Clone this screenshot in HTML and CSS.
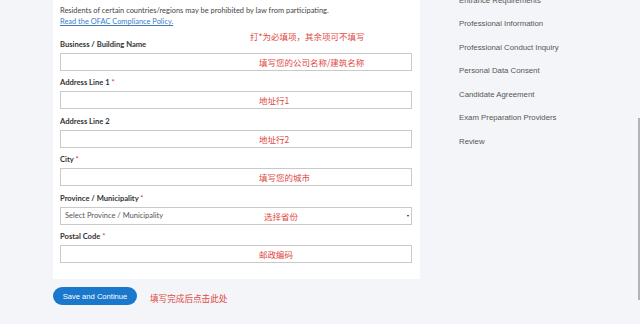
FILE: index.html
```html
<!DOCTYPE html>
<html lang="zh-CN">
<head>
  <meta charset="UTF-8" />
  <title>Address | Registration</title>
  <meta name="viewport" content="width=device-width, initial-scale=1.0" />
  <link rel="stylesheet" href="styles.css">
</head>
<body>

  <div class="page">
    <div class="main">
      <form class="card">
        <p class="intro">
          Residents of certain countries/regions may be prohibited by law from participating.<br>
          <a href="#">Read the OFAC Compliance Policy.</a>
        </p>
        <span class="note note-top">打*为必填项，其余项可不填写</span>

        <div class="field">
          <label>Business / Building Name</label>
          <div class="box">
            <input type="text" />
            <span class="note">填写您的公司名称/建筑名称</span>
          </div>
        </div>

        <div class="field">
          <label>Address Line 1 <em>*</em></label>
          <div class="box">
            <input type="text" />
            <span class="note">地址行1</span>
          </div>
        </div>

        <div class="field">
          <label>Address Line 2</label>
          <div class="box">
            <input type="text" />
            <span class="note">地址行2</span>
          </div>
        </div>

        <div class="field">
          <label>City <em>*</em></label>
          <div class="box">
            <input type="text" />
            <span class="note">填写您的城市</span>
          </div>
        </div>

        <div class="field">
          <label>Province / Municipality <em>*</em></label>
          <div class="box">
            <select>
              <option>Select Province / Municipality</option>
            </select>
            <span class="note note-select">选择省份</span>
            <span class="caret"></span>
          </div>
        </div>

        <div class="field">
          <label>Postal Code <em>*</em></label>
          <div class="box">
            <input type="text" />
            <span class="note">邮政编码</span>
          </div>
        </div>
      </form>

      <div class="actions">
        <button type="button" class="btn">Save and Continue</button>
        <span class="hint">填写完成后点击此处</span>
      </div>
    </div>

    <ul class="steps">
      <li>Entrance Requirements</li>
      <li>Professional Information</li>
      <li>Professional Conduct Inquiry</li>
      <li>Personal Data Consent</li>
      <li>Candidate Agreement</li>
      <li>Exam Preparation Providers</li>
      <li>Review</li>
    </ul>
  </div>

  <div class="scrollbar"><div class="thumb"></div></div>

</body>
</html>
```

FILE: styles.css
```css
body {
  margin: 0; background: #f4f5f8; overflow: hidden;
  font-family: Lato, "Liberation Sans", sans-serif; color: #333;
}
.page { display: flex; align-items: flex-start; }

.main { margin-left: 53px; width: 367px; }

.card {
  position: relative; background: #fff;
  padding: 5px 8px 16px 7px;
}
.intro { margin: 0 0 11.5px; font-size: 7.45px; line-height: 11px; color: #444; }
.intro a { color: #3b7dc4; text-decoration: underline; }

.field { margin-bottom: 6.6px; }
.field:last-child { margin-bottom: 0; }
.field label {
  display: block; font-size: 7.6px; line-height: 11px; font-weight: 700;
  color: #333; margin-bottom: 3px;
}
.field em { color: #d2383a; font-style: normal; font-weight: 400; }

.box { position: relative; }
.box input, .box select {
  display: block; box-sizing: border-box; width: 100%; height: 18px;
  border: 1px solid #c9c9c9; background: #fff; margin: 0;
  font-family: Lato, "Liberation Sans", sans-serif; font-size: 7.5px; color: #555;
  padding: 0 4px;
}
.box select { appearance: none; -webkit-appearance: none; border-radius: 0; }
.caret {
  position: absolute; right: 3px; top: 8px;
  border-left: 1.5px solid transparent; border-right: 1.5px solid transparent;
  border-top: 2px solid #222;
}

.note {
  position: absolute; left: 199px; top: 3px;
  font-family: "Noto Sans CJK SC", sans-serif; font-size: 8.5px; line-height: 12px;
  color: #e0493f; white-space: nowrap;
}
.note-select { left: 204px; }
.note-top { left: 197px; top: 30px; }

.actions { display: flex; align-items: center; margin-top: 8px; gap: 13px; }
.btn {
  height: 18px; width: 84px; border: none; border-radius: 9px;
  background: #1a78cc; color: #fff; padding: 0;
  font-family: "Liberation Sans", Arial, sans-serif; font-size: 7.6px;
}
.hint {
  font-family: "Noto Sans CJK SC", sans-serif; font-size: 8.6px;
  color: #e0493f; margin-top: 4px;
}

.steps {
  list-style: none; margin: -5.5px 0 0 39px; padding: 0;
  display: flex; flex-direction: column; gap: 12.5px;
  font-family: "Liberation Sans", Arial, sans-serif; font-size: 7.8px; line-height: 11px;
  color: #555;
}

.scrollbar {
  position: fixed; top: 0; right: 0; width: 3px; height: 100%;
}
.thumb {
  position: absolute; top: 118px; height: 182px; width: 2px; left: 1px;
  background: #b3b3b3;
}
```
